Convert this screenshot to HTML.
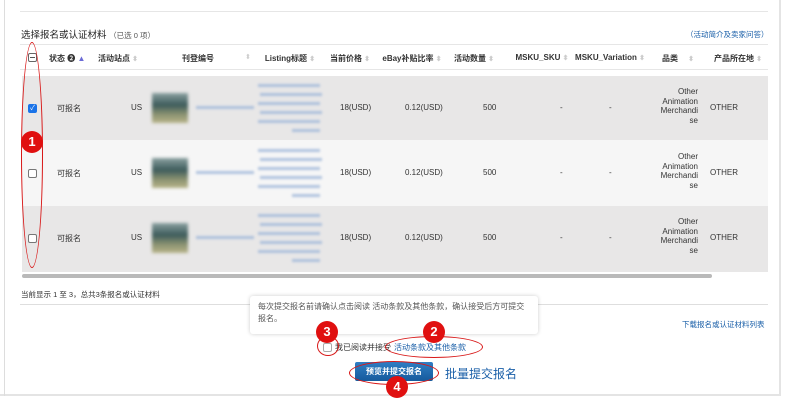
<!DOCTYPE html>
<html><head><meta charset="utf-8"><style>
*{margin:0;padding:0;box-sizing:border-box}
body{width:790px;height:410px;background:#fff;font-family:"Liberation Sans","Noto Sans CJK SC",sans-serif;position:relative;overflow:hidden;font-size:8px;color:#333}
.a{position:absolute;white-space:nowrap}
.c{text-align:center;transform:translateX(-50%)}
.h{font-weight:bold;font-size:8px;top:53px}
.blur{position:absolute;background:#9fb7d9;filter:blur(1.2px);opacity:.8}
.img{position:absolute;width:36px;height:30px;background:linear-gradient(180deg,#8aa0a0,#3e5c5c 40%,#889070 70%,#b8b48a);filter:blur(1.5px)}
.cb{position:absolute;width:9px;height:9px;border:1px solid #777;border-radius:2px;background:#fff}
.num{position:absolute;width:22px;height:22px;border-radius:50%;background:#e01010;color:#fff;font-weight:bold;font-size:13px;text-align:center;line-height:22px}
.ell{position:absolute;border:1.2px solid #d81818;border-radius:50%}
.sort{color:#ccc;font-size:7px}
</style></head><body>
<div class="a" style="left:0;top:0;width:781px;height:396px;border-right:2px solid #e4e4e4;border-bottom:2px solid #e4e4e4"></div>
<div class="a" style="left:4px;top:0;width:1px;height:396px;background:#ddd"></div>
<div class="a" style="left:20px;top:11px;width:748px;height:1px;background:#e6e6e6"></div>
<div class="a" style="left:21px;top:27px;font-size:9.5px;color:#222">选择报名或认证材料 <span style="font-size:7.5px;color:#555">（已选 0 项）</span></div>
<div class="a" style="left:686px;top:29px;font-size:7.5px;color:#1a5fa8">（活动简介及卖家问答）</div>
<div class="a" style="left:20px;top:44px;width:748px;height:1px;background:#e6e6e6"></div>
<div class="a" style="left:20px;top:69px;width:748px;height:1px;background:#e6e6e6"></div>
<div class="a" style="left:22px;top:76px;width:746px;height:64px;background:#e8e7e7"></div>
<div class="a" style="left:22px;top:140px;width:746px;height:66px;background:#f6f6f6"></div>
<div class="a" style="left:22px;top:206px;width:746px;height:66px;background:#e8e7e7"></div>
<div class="a" style="left:22px;top:274px;width:690px;height:4px;background:#b9b9b9;border-radius:2px"></div>
<div class="cb" style="left:28px;top:53px;border-color:#666"><div style="margin:3px 1px;height:1px;background:#555"></div></div>
<div class="a h" style="left:49px">状态 ❷ <span style="color:#6b6bd6">▲</span></div>
<div class="a c h" style="left:118px">活动站点 <span class="sort">⬍</span></div>
<div class="a c h" style="left:198px">刊登编号</div>
<div class="a sort" style="left:245px;top:53px">⬍</div>
<div class="a c h" style="left:290px">Listing标题 <span class="sort">⬍</span></div>
<div class="a c h" style="left:350px">当前价格 <span class="sort">⬍</span></div>
<div class="a c h" style="left:412px">eBay补贴比率 <span class="sort">⬍</span></div>
<div class="a c h" style="left:474px">活动数量 <span class="sort">⬍</span></div>
<div class="a c h" style="left:542px">MSKU_SKU <span class="sort">⬍</span></div>
<div class="a c h" style="left:610px">MSKU_Variation <span class="sort">⬍</span></div>
<div class="a c h" style="left:678px">品类 <span class="sort" style="margin-left:8px">⬍</span></div>
<div class="a c h" style="left:738px">产品所在地 <span class="sort">⬍</span></div>
<div id="rows"></div>
<script>
var ys=[108,173,238],h='';
ys.forEach(function(y,i){
 h+= i==0?'<div class="cb" style="left:28px;top:'+(y-4)+'px;background:#1a73e8;border-color:#1a73e8;color:#fff;font-size:7px;line-height:7px;text-align:center">✓</div>'
 :'<div class="cb" style="left:28px;top:'+(y-4)+'px"></div>';
 h+='<div class="a" style="left:57px;top:'+(y-5)+'px">可报名</div>';
 h+='<div class="a" style="left:131px;top:'+(y-5)+'px">US</div>';
 h+='<div class="img" style="left:152px;top:'+(y-15)+'px"></div>';
 h+='<div class="blur" style="left:196px;top:'+(y-2)+'px;width:58px;height:3px"></div>';
 for(var k=0;k<6;k++){var w=k==5?28:62;h+='<div class="blur" style="left:'+(k==5?292:258+(k%2)*2)+'px;top:'+(y-24+k*9)+'px;width:'+w+'px;height:3px"></div>';}
 h+='<div class="a" style="left:340px;top:'+(y-5)+'px">18(USD)</div>';
 h+='<div class="a" style="left:405px;top:'+(y-5)+'px">0.12(USD)</div>';
 h+='<div class="a" style="left:483px;top:'+(y-5)+'px">500</div>';
 h+='<div class="a" style="left:560px;top:'+(y-5)+'px">-</div>';
 h+='<div class="a" style="left:609px;top:'+(y-5)+'px">-</div>';
 h+='<div class="a" style="left:660px;top:'+(y-21)+'px;text-align:right;white-space:normal;width:38px;line-height:9.5px">Other Animation Merchandi se</div>';
 h+='<div class="a" style="left:710px;top:'+(y-5)+'px">OTHER</div>';
});
document.getElementById('rows').innerHTML=h;
</script>
<div class="a" style="left:21px;top:289px;font-size:7.5px">当前显示 1 至 3，总共3条报名或认证材料</div>
<div class="a" style="left:20px;top:304px;width:748px;height:1px;background:#dedede"></div>
<div class="a" style="left:682px;top:319px;font-size:7.5px;color:#1a5fa8">下载报名或认证材料列表</div>
<div class="a" style="left:250px;top:296px;width:288px;height:38px;background:#fff;box-shadow:0 0 4px rgba(0,0,0,.2);border-radius:3px;padding:5px 8px;font-size:8px;color:#555;white-space:normal;line-height:12px">每次提交报名前请确认点击阅读 活动条款及其他条款，确认接受后方可提交报名。</div>
<div class="cb" style="left:323px;top:343px;border-color:#aaa"></div>
<div class="a" style="left:335px;top:342px;font-size:8px">我已阅读并接受</div>
<div class="a" style="left:394px;top:342px;font-size:8px;color:#1a5fa8">活动条款及其他条款</div>
<div class="a" style="left:355px;top:362px;width:78px;height:19px;background:linear-gradient(#2f7ec4,#165a9c);border-radius:2px;color:#fff;font-weight:bold;font-size:8px;text-align:center;line-height:19px">预览并提交报名</div>
<div class="a" style="left:445px;top:365px;font-size:12px;color:#1a5fa8">批量提交报名</div>
<div class="ell" style="left:21px;top:42px;width:22px;height:226px"></div>
<div class="ell" style="left:385px;top:336px;width:98px;height:22px"></div>
<div class="ell" style="left:349px;top:361px;width:90px;height:24px"></div>
<div class="ell" style="left:317px;top:336px;width:22px;height:20px"></div>
<div class="num" style="left:21px;top:131px">1</div>
<div class="num" style="left:423px;top:321px">2</div>
<div class="num" style="left:316px;top:321px">3</div>
<div class="num" style="left:386px;top:376px">4</div>
</body></html>
